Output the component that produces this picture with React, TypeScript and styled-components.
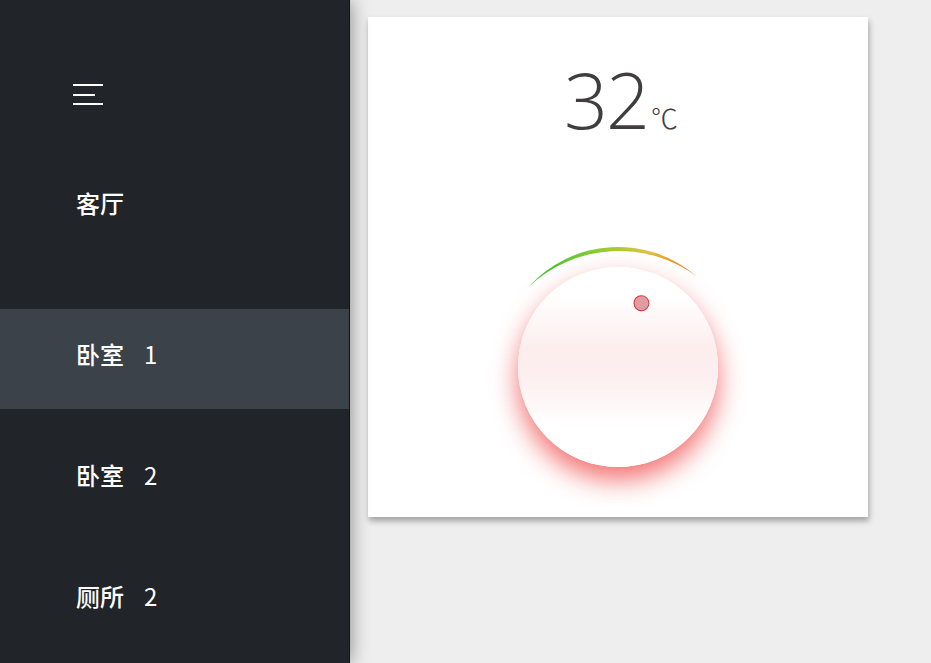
import React from "react";
import styled, { createGlobalStyle } from "styled-components";

const GlobalStyle = createGlobalStyle`
  html, body {
    margin: 0;
    padding: 0;
    height: 100%;
    overflow: hidden;
  }

  body {
    background: #eeeeee;
    font-family: "Noto Sans CJK SC", "Noto Sans", sans-serif;
  }

  #root {
    height: 100%;
  }
`;

interface Room {
  name: string;
  num?: string;
}

const rooms: Room[] = [
  { name: "客厅" },
  { name: "卧室", num: "1" },
  { name: "卧室", num: "2" },
  { name: "厕所", num: "2" }
];

const Layout = styled.div`
  display: flex;
  height: 100%;
`;

const Sidebar = styled.nav`
  position: relative;
  z-index: 1;
  flex: 0 0 350px;
  height: 100%;
  box-sizing: border-box;
  background: #212429;
  border-right: 1px solid #121316;
  box-shadow: 0 0 18px rgba(0, 0, 0, 0.45);
  padding-top: 84px;
  overflow: hidden;
`;

const MenuButton = styled.div`
  display: flex;
  flex-direction: column;
  gap: 7.5px;
  width: 30px;
  margin-left: 73px;

  span {
    display: block;
    height: 2px;
    background: #ffffff;
  }

  span:nth-child(2) {
    width: 22px;
  }
`;

const RoomList = styled.ul`
  list-style: none;
  margin: 53px 0 0;
  padding: 0;
  display: flex;
  flex-direction: column;
  gap: 21px;

  li:first-child {
    margin-bottom: 30px;
  }
`;

interface RoomItemProps {
  $active?: boolean;
}

const RoomItem = styled.li<RoomItemProps>`
  height: 100px;
  line-height: 89px;
  padding-left: 76px;
  color: #ffffff;
  font-size: 24px;
  font-weight: 500;
  background: ${({ $active }) => ($active ? "#3b424a" : "transparent")};
`;

const RoomNum = styled.span`
  margin-left: 20px;
  font-weight: 400;
`;

const Main = styled.main`
  flex: 1;
  padding: 17px 0 0 18px;
`;

const Card = styled.section`
  width: 500px;
  height: 500px;
  background: #ffffff;
  box-shadow: 1px 4px 6px rgba(0, 0, 0, 0.32);
  display: flex;
  flex-direction: column;
  align-items: center;
  padding-top: 43px;
  box-sizing: border-box;
`;

const Temperature = styled.div`
  height: 80px;
  line-height: 80px;
  font-family: "Open Sans", "Noto Sans", sans-serif;
  font-weight: 300;
  font-size: 77px;
  letter-spacing: -2px;
  color: #403d3e;
  margin-left: 6px;
`;

const Unit = styled.span`
  font-family: "Noto Sans CJK SC", sans-serif;
  font-weight: 300;
  font-size: 27px;
  line-height: 1;
  letter-spacing: 0;
  margin-left: 3px;
  color: #403d3e;
`;

const Dial = styled.div`
  position: relative;
  width: 260px;
  height: 260px;
  margin-top: 97px;
  display: flex;
  align-items: center;
  justify-content: center;
`;

const Arc = styled.svg`
  position: absolute;
  inset: 0;
  pointer-events: none;
`;

const Knob = styled.div`
  position: relative;
  width: 200px;
  height: 200px;
  border-radius: 50%;
  background: linear-gradient(
    to bottom,
    #ffffff 14%,
    #fdeeee 40%,
    #fdefef 55%,
    #ffffff 80%
  );
  box-shadow: 0 13px 26px rgba(240, 75, 75, 0.78);
`;

interface IndicatorProps {
  $angle: number;
}

const Indicator = styled.div<IndicatorProps>`
  position: absolute;
  inset: 0;
  transform: rotate(${({ $angle }) => $angle}deg);
`;

const Dot = styled.div`
  position: absolute;
  top: 24px;
  left: 91px;
  width: 14px;
  height: 14px;
  border-radius: 50%;
  background: #e09ca0;
  border: 1.5px solid #d6323b;
`;

const App = () => {
  return (
    <>
      <GlobalStyle />
      <Layout>
        <Sidebar>
          <MenuButton>
            <span />
            <span />
            <span />
          </MenuButton>
          <RoomList>
            {rooms.map((room, i) => (
              <RoomItem key={i} $active={i === 1}>
                {room.name}
                {room.num && <RoomNum>{room.num}</RoomNum>}
              </RoomItem>
            ))}
          </RoomList>
        </Sidebar>
        <Main>
          <Card>
            <Temperature>
              32<Unit>℃</Unit>
            </Temperature>
            <Dial>
              <Arc viewBox="0 0 260 260" width="260" height="260">
                <defs>
                  <linearGradient
                    id="arcGrad"
                    gradientUnits="userSpaceOnUse"
                    x1="40"
                    y1="0"
                    x2="209"
                    y2="0"
                  >
                    <stop offset="0%" stopColor="#2fc02f" />
                    <stop offset="40%" stopColor="#8acb34" />
                    <stop offset="70%" stopColor="#dcc43c" />
                    <stop offset="100%" stopColor="#f0761c" />
                  </linearGradient>
                </defs>
                <path
                  d="M 40.8 49.7 A 120 120 0 0 1 208.7 39.4 A 131.5 131.5 0 0 0 40.8 49.7 Z"
                  fill="url(#arcGrad)"
                />
              </Arc>
              <Knob>
                <Indicator $angle={21}>
                  <Dot />
                </Indicator>
              </Knob>
            </Dial>
          </Card>
        </Main>
      </Layout>
    </>
  );
};

export default App;
